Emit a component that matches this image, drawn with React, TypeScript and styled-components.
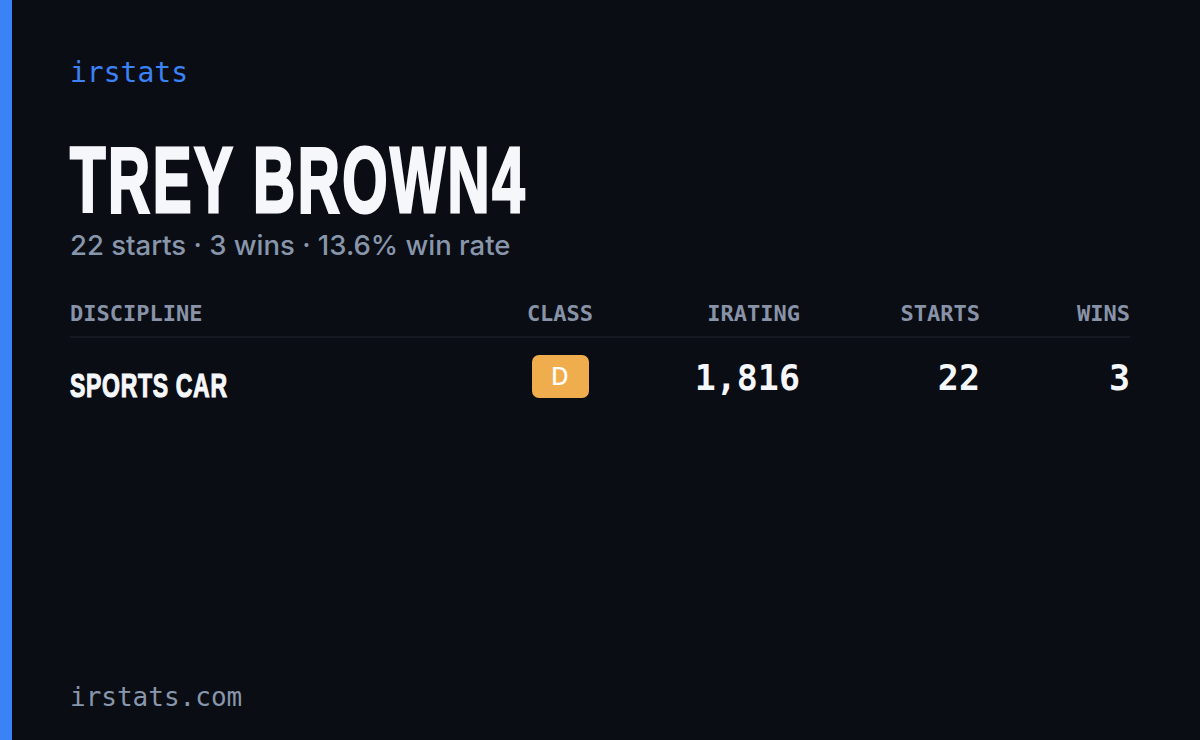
import React from "react";
import styled, { createGlobalStyle } from "styled-components";

const Global = createGlobalStyle`
  html, body { margin: 0; padding: 0; background: #0a0d14; }
  body { width: 1200px; height: 740px; overflow: hidden; }
`;

const mono = `"DejaVu Sans Mono", "Liberation Mono", monospace`;
const cond = `"Liberation Sans", Arial, sans-serif`;
const sans = `Inter, "Noto Sans", sans-serif`;

const Frame = styled.div`
  display: flex;
  width: 1200px;
  height: 740px;
  background: #0a0d14;
`;

const Accent = styled.div`
  width: 12px;
  flex: none;
  background: #3b82f6;
`;

const Content = styled.div`
  flex: 1;
  display: flex;
  flex-direction: column;
  padding: 58px 58px 28px 58px;
`;

const Brand = styled.div`
  font-family: ${mono};
  font-size: 28px;
  line-height: 30px;
  color: #3b82f6;
`;

const Title = styled.h1`
  margin: 50px 0 0;
  font-family: ${cond};
  font-weight: 700;
  font-size: 92px;
  line-height: 84px;
  letter-spacing: 4px;
  color: #f5f7fa;
  -webkit-text-stroke: 3px #f5f7fa;
  white-space: nowrap;
`;

const Squeeze = styled.span<{ $x: number }>`
  display: inline-block;
  transform: scaleX(${(p) => p.$x});
  transform-origin: left center;
`;

const Subtitle = styled.div`
  margin-top: 6px;
  font-family: ${sans};
  font-weight: 500;
  font-size: 27.5px;
  line-height: 34px;
  color: #8896ab;
`;

const Table = styled.div`
  margin-top: 40px;
  display: grid;
  grid-template-columns: 430px 120px 180px 180px 150px;
`;

const HeadCell = styled.div<{ $align: "left" | "center" | "right" }>`
  font-family: ${mono};
  font-weight: 700;
  font-size: 22px;
  line-height: 24px;
  color: #8893a8;
  text-transform: uppercase;
  text-align: ${(p) => p.$align};
  padding-bottom: 10px;
  border-bottom: 2px solid #151922;
`;

const Cell = styled.div<{ $align: "left" | "center" | "right" }>`
  display: flex;
  align-items: center;
  justify-content: ${(p) =>
    p.$align === "left" ? "flex-start" : p.$align === "center" ? "center" : "flex-end"};
  padding-top: 16px;
  height: 44px;
`;

const Discipline = styled.span`
  margin-top: 19px;
  font-family: ${cond};
  font-weight: 700;
  font-size: 34px;
  letter-spacing: 1px;
  color: #f5f7fa;
  -webkit-text-stroke: 1.2px #f5f7fa;
  white-space: nowrap;
`;

const Badge = styled.span<{ $color: string }>`
  display: inline-flex;
  align-items: center;
  justify-content: center;
  width: 57px;
  height: 43px;
  border-radius: 7px;
  background: ${(p) => p.$color};
  font-family: ${sans};
  font-weight: 500;
  font-size: 24px;
  color: #ffffff;
`;

const Num = styled.span`
  margin-top: 4px;
  font-family: ${mono};
  font-weight: 700;
  font-size: 35px;
  color: #f5f7fa;
`;

const Spacer = styled.div`
  flex: 1;
`;

const Footer = styled.div`
  font-family: ${mono};
  font-size: 26px;
  line-height: 30px;
  color: #8896ab;
`;

const rows = [
  { discipline: "Sports Car", cls: "D", color: "#f0ad4e", irating: "1,816", starts: "22", wins: "3" },
];

export default function App() {
  return (
    <>
      <Global />
      <Frame>
        <Accent />
        <Content>
          <Brand>irstats</Brand>
          <Title>
            <Squeeze $x={0.633}>TREY BROWN4</Squeeze>
          </Title>
          <Subtitle>22 starts · 3 wins · 13.6% win rate</Subtitle>
          <Table>
            <HeadCell $align="left">Discipline</HeadCell>
            <HeadCell $align="center">Class</HeadCell>
            <HeadCell $align="right">iRating</HeadCell>
            <HeadCell $align="right">Starts</HeadCell>
            <HeadCell $align="right">Wins</HeadCell>
            {rows.map((r) => (
              <React.Fragment key={r.discipline}>
                <Cell $align="left">
                  <Discipline>
                    <Squeeze $x={0.677}>{r.discipline.toUpperCase()}</Squeeze>
                  </Discipline>
                </Cell>
                <Cell $align="center">
                  <Badge $color={r.color}>{r.cls}</Badge>
                </Cell>
                <Cell $align="right">
                  <Num>{r.irating}</Num>
                </Cell>
                <Cell $align="right">
                  <Num>{r.starts}</Num>
                </Cell>
                <Cell $align="right">
                  <Num>{r.wins}</Num>
                </Cell>
              </React.Fragment>
            ))}
          </Table>
          <Spacer />
          <Footer>irstats.com</Footer>
        </Content>
      </Frame>
    </>
  );
}
